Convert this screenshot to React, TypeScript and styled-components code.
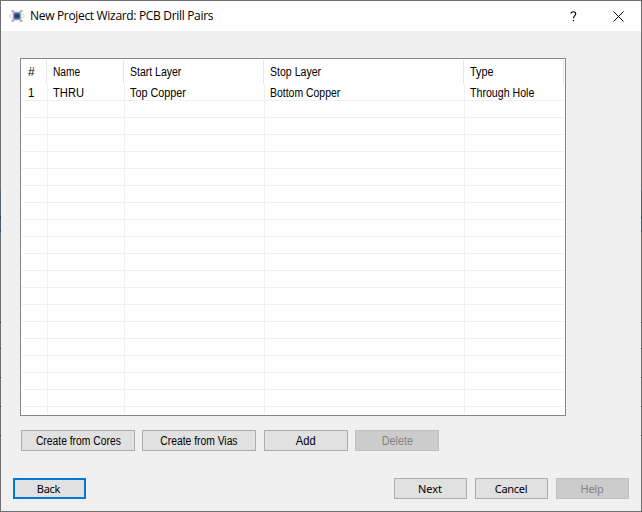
import React from "react";
import styled, { createGlobalStyle, css } from "styled-components";

const GlobalStyle = createGlobalStyle`
  * { box-sizing: border-box; }
  body { margin: 0; }
`;

const edgeShade = `linear-gradient(180deg,
  #6f6f6f 0 190px, #55636f 190px 216px, #2f4350 216px 219px, #48606b 219px 230px,
  #3a4e58 230px 232px, #716e6d 232px 322px, #333 322px 323px, #707070 323px 348px,
  #333 348px 349px, #707070 349px 377px, #333 377px 378px, #707070 378px 406px,
  #333 406px 407px, #707070 407px 435px, #333 435px 436px, #707070 436px)`;

const Window = styled.div`
  width: 642px;
  height: 512px;
  padding: 1px;
  display: flex;
  background: ${edgeShade};
  overflow: hidden;
`;

const Dialog = styled.main`
  flex: 1;
  display: flex;
  flex-direction: column;
  background: #f0f0f0;
  color: #000;
`;

const TitleBar = styled.header`
  height: 30px;
  flex: none;
  display: flex;
  align-items: center;
  padding-left: 8px;
  background: #fff;
`;

const Title = styled.h1`
  margin: 0 auto 0 5px;
  font: 400 12px/28px "Open Sans", sans-serif;
  letter-spacing: -0.32px;
  white-space: pre;
`;

const CaptionButton = styled.button`
  width: 45px;
  height: 28px;
  padding: 0;
  border: 0;
  background: none;
  display: grid;
  place-items: center;
`;

const DrillTable = styled.section`
  width: 546px;
  height: 358px;
  flex: none;
  margin: 27px 0 0 19px;
  padding: 1px;
  border: 1px solid #828790;
  background: #fff;
  font: 400 12px/16px "Liberation Sans", sans-serif;
`;

const HeaderRow = styled.div`
  width: 542px;
  height: 24px;
  display: grid;
  grid-template-columns: 25px 77px 140px 200px 100px;
`;

const HeaderCell = styled.div`
  padding: 4px 0 0 6px;
  border-right: 1px solid #e5e5e5;
`;

const Body = styled.div`
  height: 330px;
  overflow: hidden;
`;

const Row = styled.div`
  width: 542px;
  height: 17px;
  display: grid;
  grid-template-columns: 26px 77px 140px 200px 99px;
  border-bottom: 1px solid #f0f0f0;
`;

const Cell = styled.div`
  height: 17px;
  padding-left: 5px;
  line-height: 18px;
  border-right: 1px solid #f0f0f0;
  white-space: nowrap;
  &:first-child { padding-left: 6px; }
  &:last-child { border-right: 0; }
`;

const Label = styled.span<{ $narrow?: number; $track?: number }>`
  display: inline-block;
  letter-spacing: ${(p) => p.$track ?? 0}px;
  white-space: pre;
  ${(p) => p.$narrow && css`transform: scaleX(${p.$narrow});`}
`;

const CellLabel = styled(Label)`
  transform-origin: left;
`;

const TableActions = styled.div`
  display: flex;
  margin: 14px 0 0 20px;
  gap: 7px;
`;

const Navigation = styled.nav`
  display: flex;
  margin: 27px 12px 0;
  gap: 8px;
`;

const Button = styled.button<{ $width: number; $nav?: boolean; $focused?: boolean }>`
  width: ${(p) => p.$width}px;
  height: 21px;
  padding: ${(p) => (p.$nav ? "0 1px 0 0" : "2px 0 0")};
  border: 1px solid #adadad;
  background: #e1e1e1;
  color: #000;
  display: flex;
  justify-content: center;
  align-items: center;
  font: 400 ${(p) => (p.$nav ? '11px/17px "Noto Sans"' : '12px/17px "Liberation Sans"')}, sans-serif;
  ${(p) => p.$focused && css`
    margin-right: auto;
    padding-right: 2px;
    border: 2px solid #0078d7;
  `}
  &:disabled {
    border-color: #bfbfbf;
    background: #cccccc;
    color: #838383;
  }
`;

const AddButton = styled(Button)`
  margin-left: 1px;
`;

const AppIcon = () => (
  <svg width="16" height="16" viewBox="0 0 16 16" fill="none">
    <ellipse cx="8" cy="8" rx="7.3" ry="3" stroke="#c5cad1" />
    <path d="M3.5 3l3 2.5M12.5 3l-3 2.5M3.5 13l3-2.5M12.5 13l-3-2.5" stroke="#aaa8a8" strokeWidth="1.8" />
    <circle cx="8" cy="8" r="4.3" fill="#8b9bb2" />
    <rect x="5" y="5" width="6" height="6" rx="1.5" fill="#3d659c" />
    <rect x="6" y="6.5" width="4" height="3" fill="#183c75" />
    <path d="M2.5 2h2v2h-2zM11.5 2h2v2h-2zM2.5 12h2v2h-2zM11.5 12h2v2h-2z" fill="#c9a583" />
  </svg>
);

const titles: [string, number][] = [["#", 1], ["Name", 0.85], ["Start Layer", 0.875], ["Stop Layer", 0.88], ["Type", 0.9]];
const values: [string, number][] = [["1", 0.95], ["THRU", 0.93], ["Top Copper", 0.9], ["Bottom Copper", 0.87], ["Through Hole", 0.885]];

export default function App() {
  return (
    <>
      <GlobalStyle />
      <Window>
        <Dialog>
          <TitleBar>
            <AppIcon />
            <Title>New Project Wizard: PCB Drill Pairs</Title>
            <CaptionButton aria-label="Help">
              <svg width="7" height="11" viewBox="0 0 7 11" fill="none">
                <path d="M1 2.6C1 .1 5.7 .1 5.7 2.8C5.7 4.6 3.5 4.7 3.5 7.2" stroke="#000" strokeWidth="1.15" />
                <path d="M2.9 9h1.2v1.2H2.9z" fill="#000" />
              </svg>
            </CaptionButton>
            <CaptionButton aria-label="Close">
              <svg width="11" height="11" viewBox="0 0 11 11">
                <path d="M.5.5l10 10M10.5.5l-10 10" stroke="#000" strokeWidth="1" />
              </svg>
            </CaptionButton>
          </TitleBar>
          <DrillTable>
            <HeaderRow>
              {titles.map(([text, narrow]) => (
                <HeaderCell key={text}><CellLabel $narrow={narrow}>{text}</CellLabel></HeaderCell>
              ))}
            </HeaderRow>
            <Body>
              {Array.from({ length: 20 }, (_, row) => (
                <Row key={row}>
                  {values.map(([text, narrow]) => (
                    <Cell key={text}>{row === 0 && <CellLabel $narrow={narrow}>{text}</CellLabel>}</Cell>
                  ))}
                </Row>
              ))}
            </Body>
          </DrillTable>
          <TableActions>
            <Button $width={114}><Label $narrow={0.86}>Create from Cores</Label></Button>
            <Button $width={114}><Label $narrow={0.86}>Create from Vias</Label></Button>
            <AddButton $width={84}><Label $narrow={0.93}>Add</Label></AddButton>
            <Button $width={84} disabled><Label $narrow={0.9}>Delete</Label></Button>
          </TableActions>
          <Navigation>
            <Button $nav $focused $width={73}><Label $track={-0.3}>Back</Label></Button>
            <Button $nav $width={73}><Label>Next</Label></Button>
            <Button $nav $width={73}><Label $track={-0.3}>Cancel</Label></Button>
            <Button $nav $width={73} disabled><Label $track={-0.3}>Help</Label></Button>
          </Navigation>
        </Dialog>
      </Window>
    </>
  );
}
